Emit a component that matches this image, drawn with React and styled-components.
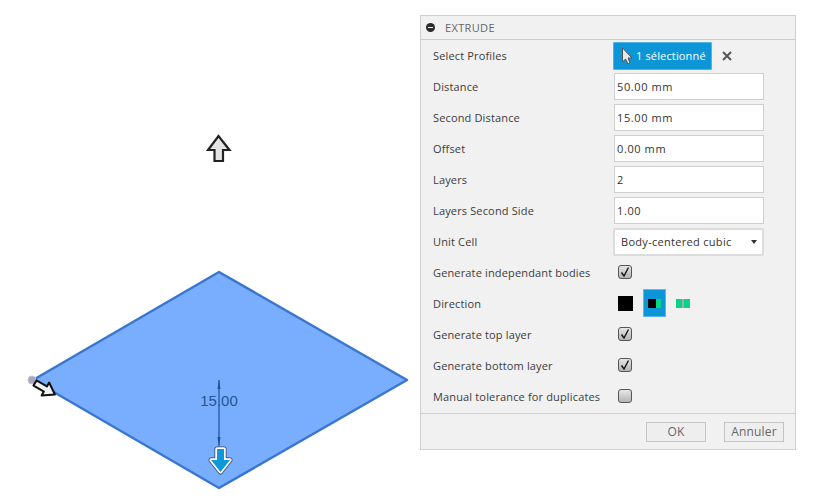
import React from "react";
import styled, { createGlobalStyle } from "styled-components";

const GlobalStyle = createGlobalStyle`
  html, body {
    margin: 0;
    padding: 0;
    background: #fff;
  }
`;

const App = () => {
  const textRows = [
    { label: "Distance", value: "50.00 mm" },
    { label: "Second Distance", value: "15.00 mm" },
    { label: "Offset", value: "0.00 mm" },
    { label: "Layers", value: "2" },
    { label: "Layers Second Side", value: "1.00" },
  ];
  return (
    <Page>
      <GlobalStyle />
      <Viewport width="420" height="503" viewBox="0 0 420 503">
        <polygon points="33,380 219,272 407,380 219,488" fill="#79aeff" stroke="#3a76cf" strokeWidth="2.500" strokeLinejoin="round" />
        <path d="M219 380V446" stroke="#1d5097" strokeWidth="1.200" />
        <path d="M219 380l-1.500 9h3zM219 446l-1.500-9h3z" fill="#1d5097" />
        <text x="219" y="406" textAnchor="middle" fontFamily="Liberation Sans, sans-serif" fontSize="15" fill="#24568f">15.00</text>
        <circle cx="32" cy="380" r="4" fill="#a9a4c4" stroke="#c4c4c8" strokeWidth="1" />
        <path d="M0 -3H12V-7.500L23 0 12 7.500V3H0Z" fill="#f1f1f1" stroke="#111" strokeWidth="2" strokeLinejoin="round" transform="translate(35 383) rotate(30)" />
        <path d="M208 150L218.500 136 229.500 150H223V161H214.500V150Z" fill="#e4e4e4" stroke="#222" strokeWidth="2.200" strokeLinejoin="miter" />
        <path d="M217 449H224V460H230L220.500 472 211 460H217Z" stroke="#31475c" strokeWidth="5" strokeLinejoin="round" />
        <path d="M217 449H224V460H230L220.500 472 211 460H217Z" stroke="#fff" strokeWidth="3.500" strokeLinejoin="round" />
        <path d="M217 449H224V460H230L220.500 472 211 460H217Z" fill="#0e97d9" />
      </Viewport>
      <Panel>
        <Header>
          <MinusIcon />
          <HeaderTitle>EXTRUDE</HeaderTitle>
        </Header>
        <Body>
          <Row>
            <Label>Select Profiles</Label>
            <SelectionGroup>
              <SelectionButton>
                <svg width="12" height="18" viewBox="0 0 12 18">
                  <path d="M1.500 1V15L4.500 12 7 17 9 16 7 11H11Z" fill="#e8e8e8" stroke="#555" strokeWidth="1" />
                </svg>
                1 sélectionné
              </SelectionButton>
              <ClearIcon width="10" height="10" viewBox="0 0 10 10">
                <path d="M1 1L9 9M9 1L1 9" stroke="#555" strokeWidth="2" />
              </ClearIcon>
            </SelectionGroup>
          </Row>
          {textRows.map((row) => {
            return (
              <Row key={row.label}>
                <Label>{row.label}</Label>
                <TextField>{row.value}</TextField>
              </Row>
            );
          })}
          <Row>
            <Label>Unit Cell</Label>
            <Dropdown>
              Body-centered cubic
              <Caret />
            </Dropdown>
          </Row>
          <Row>
            <Label>Generate independant bodies</Label>
            <Checkbox checked />
          </Row>
          <Row>
            <Label>Direction</Label>
            <DirectionGroup>
              <BlackSwatch />
              <DirectionButton>
                <InnerBlack />
                <InnerGreen />
              </DirectionButton>
              <GreenPair>
                <GreenDivider />
              </GreenPair>
            </DirectionGroup>
          </Row>
          <Row>
            <Label>Generate top layer</Label>
            <Checkbox checked />
          </Row>
          <Row>
            <Label>Generate bottom layer</Label>
            <Checkbox checked />
          </Row>
          <Row>
            <Label>Manual tolerance for duplicates</Label>
            <Checkbox />
          </Row>
        </Body>
        <Footer>
          <FooterButton>OK</FooterButton>
          <FooterButton>Annuler</FooterButton>
        </Footer>
      </Panel>
    </Page>
  );
};

const Checkbox = ({ checked }) => (
  <CheckBoxFrame>
    {checked && (
      <svg width="14" height="14" viewBox="0 0 14 14">
        <path d="M3.500 7.500L6 11 10.500 2.500" fill="none" stroke="#111" strokeWidth="1.400" />
      </svg>
    )}
  </CheckBoxFrame>
);

const Page = styled.div`
  display: flex;
  align-items: flex-start;
  width: 818px;
  height: 503px;
  overflow: hidden;
  background: #fff;
  font-family: "Open Sans", "Noto Sans", sans-serif;
`;

const Viewport = styled.svg`
  flex: 0 0 420px;
  display: block;
`;

const Panel = styled.div`
  box-sizing: border-box;
  width: 376px;
  height: 435px;
  margin-top: 15px;
  display: flex;
  flex-direction: column;
  background: #f1f1f1;
  border: 1px solid #cfcfcf;
  color: #3c3c3c;
  font-size: 11px;
  letter-spacing: 0.15px;
`;

const Header = styled.div`
  box-sizing: border-box;
  flex: 0 0 24px;
  display: flex;
  align-items: center;
  gap: 10px;
  padding: 0 0 1px 5px;
  border-bottom: 1px solid #cfcfcf;
`;

const MinusIcon = styled.span`
  position: relative;
  width: 9px;
  height: 9px;
  border-radius: 50%;
  background: #2b2b2b;

  &::after {
    content: "";
    position: absolute;
    left: 2px;
    right: 2px;
    top: 4px;
    height: 1px;
    background: #f1f1f1;
  }
`;

const HeaderTitle = styled.span`
  color: #666;
  letter-spacing: 0.35px;
`;

const Body = styled.div`
  box-sizing: border-box;
  flex: 0 0 374px;
  padding-left: 12px;
  border-bottom: 1px solid #cfcfcf;
`;

const Row = styled.div`
  height: 31px;
  display: flex;
  align-items: center;
`;

const Label = styled.span`
  flex: 0 0 180px;
  white-space: nowrap;
`;

const SelectionGroup = styled.div`
  display: flex;
  align-items: center;
  gap: 10px;
`;

const SelectionButton = styled.div`
  box-sizing: border-box;
  width: 99px;
  height: 28px;
  display: flex;
  align-items: center;
  gap: 3px;
  padding-left: 7px;
  background: #0c96d8;
  border: 1px solid #4fb4e4;
  border-radius: 1px;
  color: #fff;
  white-space: nowrap;
`;

const ClearIcon = styled.svg`
  display: block;
`;

const TextField = styled.div`
  box-sizing: border-box;
  width: 150px;
  height: 27px;
  margin-left: 1px;
  display: flex;
  align-items: center;
  padding-left: 2px;
  background: #fff;
  border: 1px solid #cfcfcf;
  color: #333;
  letter-spacing: 0.6px;
`;

const Dropdown = styled.div`
  box-sizing: border-box;
  position: relative;
  width: 151px;
  height: 28px;
  display: flex;
  align-items: center;
  padding-left: 6px;
  background: #fff;
  border: 2px solid #dcdcdc;
  border-radius: 2px;
  color: #333;
  letter-spacing: 0.3px;
  white-space: nowrap;
`;

const Caret = styled.span`
  position: absolute;
  right: 5px;
  top: 10px;
  border-left: 3px solid transparent;
  border-right: 3px solid transparent;
  border-top: 4px solid #333;
`;

const CheckBoxFrame = styled.div`
  box-sizing: border-box;
  width: 14px;
  height: 14px;
  margin: 0 0 2px 5px;
  background: linear-gradient(#e6e6e6, #b4b4b4);
  border: 1px solid #555;
  border-radius: 3px;
  display: flex;
  align-items: center;
  justify-content: center;

  svg {
    flex: none;
  }
`;

const DirectionGroup = styled.div`
  display: flex;
  align-items: center;
  margin: 0 0 1px 5px;
`;

const BlackSwatch = styled.div`
  width: 15px;
  height: 15px;
  background: #000;
`;

const DirectionButton = styled.div`
  box-sizing: border-box;
  width: 23px;
  height: 28px;
  margin-left: 10px;
  display: flex;
  align-items: center;
  justify-content: center;
  background: #0c96d8;
  border: 1px solid #5cb8e6;
`;

const InnerBlack = styled.div`
  width: 8px;
  height: 9px;
  background: #000;
`;

const InnerGreen = styled.div`
  width: 5px;
  height: 9px;
  background: #05d683;
`;

const GreenPair = styled.div`
  width: 14px;
  height: 9px;
  margin-left: 10px;
  display: flex;
  justify-content: center;
  background: #05d683;
`;

const GreenDivider = styled.div`
  width: 2px;
  background: #a9a9a9;
`;

const Footer = styled.div`
  flex: 1;
  display: flex;
  align-items: center;
  justify-content: flex-end;
  gap: 18px;
  padding-right: 11px;
`;

const FooterButton = styled.div`
  box-sizing: border-box;
  width: 60px;
  height: 20px;
  display: flex;
  align-items: center;
  justify-content: center;
  background: #eeeeee;
  border: 1px solid #c4c4c4;
  color: #666;
  font-size: 12px;
`;

export default App;
